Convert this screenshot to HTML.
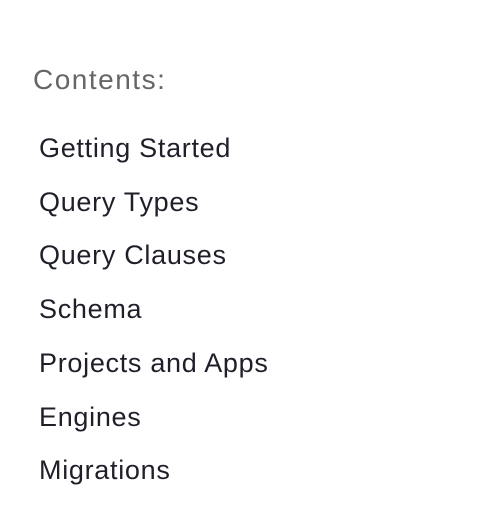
<!DOCTYPE html>
<html><head><style>
body{margin:0;background:#fff;width:478px;height:506px;overflow:hidden;font-family:"Liberation Sans",sans-serif;}
.h{position:absolute;left:33px;top:63px;font-size:28px;letter-spacing:1.5px;color:#666;line-height:34px;}
.i{position:absolute;left:39px;font-size:27px;letter-spacing:0.7px;color:#1f1f2a;line-height:34px;white-space:nowrap;}
</style></head><body>
<div class="h">Contents:</div>
<div class="i" style="top:131px">Getting Started</div>
<div class="i" style="top:185px">Query Types</div>
<div class="i" style="top:238px">Query Clauses</div>
<div class="i" style="top:292px">Schema</div>
<div class="i" style="top:346px">Projects and Apps</div>
<div class="i" style="top:400px">Engines</div>
<div class="i" style="top:453px">Migrations</div>
</body></html>
